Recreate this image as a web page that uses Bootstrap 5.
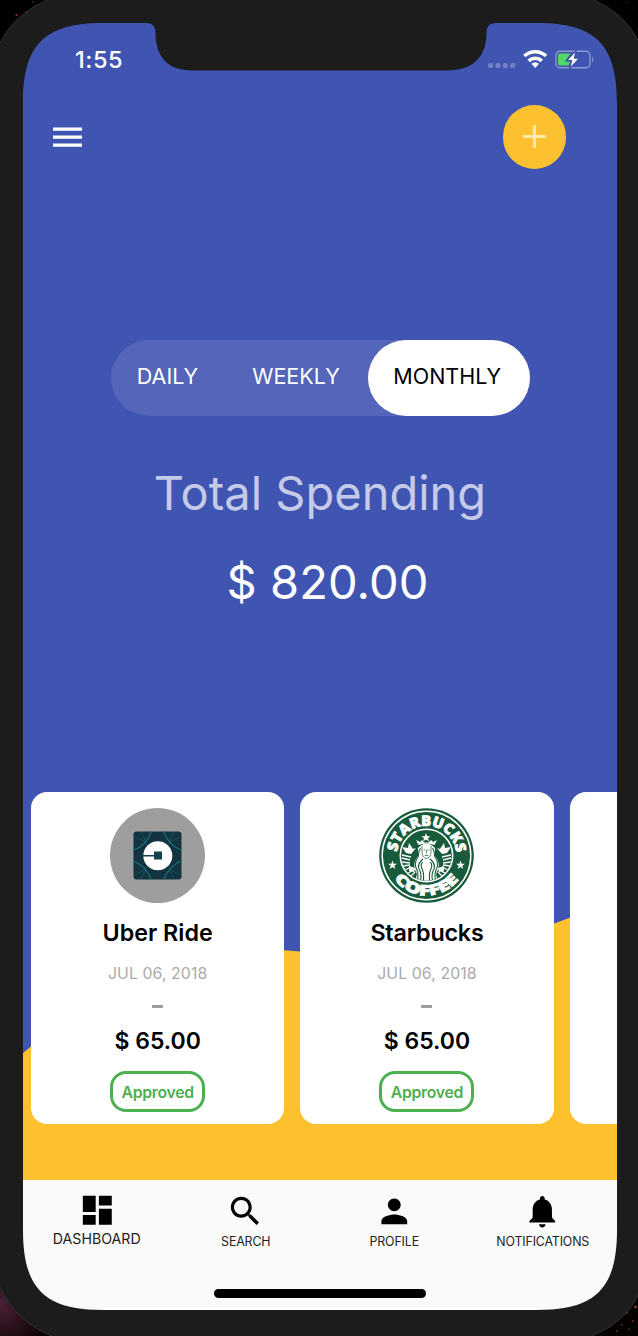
<!DOCTYPE html>
<html lang="en">
<head>
<meta charset="utf-8">
<meta name="viewport" content="width=device-width, initial-scale=1">
<title>Total Spending</title>
<link href="https://cdn.jsdelivr.net/npm/bootstrap@5.3.0/dist/css/bootstrap.min.css" rel="stylesheet">
<style>
  body { font-family: Inter, Roboto, "Liberation Sans", sans-serif; background: #000; width: 638px; height: 1336px; overflow: hidden; }
  svg { display: block; flex-shrink: 0; }
  .phone { width: 638px; height: 1336px; padding: 23px 21px 26px 23px; background: #1c1c1c; }
  .bezel { position: absolute; inset: 0; pointer-events: none; z-index: 5; }
  .hero { height: 1157px; background: #4055b1; }
  .wave { position: absolute; left: 0; bottom: 0; }
  .status { height: 73px; padding: 0 23px 0 52px; }
  .clock { font-size: 23.5px; font-weight: 500; line-height: 28px; letter-spacing: .5px; }
  .topbar { height: 82px; padding: 0 51px 0 30px; }
  .fab { width: 63.4px; height: 63.4px; background: #fdc02f; }
  .period { width: 418.5px; height: 76px; margin: 162px 0 0 88px; background: #5565b9; border-radius: 38px; }
  .period button { height: 76px; font-size: 21.5px; line-height: 26px; color: #fff; border: 0; background: none; padding: 0 0 4px; }
  .period .chosen { width: 161.5px; background: #fff; color: #000; border-radius: 38px; padding-right: 3px; }
  .total-label { font-size: 47px; line-height: 58px; color: #c5cae9; margin-top: 48px; }
  .total-sum { font-size: 47px; line-height: 58px; margin: 31px 0 0 15px; letter-spacing: .1px; }
  .deck { margin: 181px 0 0 8px; gap: 16px; }
  .expense { width: 253.3px; height: 332.4px; border: 0; border-radius: 16px; padding-top: 16px; flex: none; color: #000; }
  .expense h2 { font-size: 23.3px; line-height: 28px; font-weight: 600; margin: 16px 0 0; }
  .expense .tight { letter-spacing: -.2px; }
  .day { font-size: 15.8px; line-height: 20px; color: #aaa; margin-top: 17px; letter-spacing: .1px; }
  .dash { width: 11px; height: 2.6px; background: #9e9e9e; margin-top: 21.4px; }
  .price { font-size: 23px; line-height: 28px; font-weight: 600; margin-top: 19px; }
  .state { width: 95px; height: 41px; border: 3px solid #4caf50; border-radius: 16px; color: #4caf50; font-size: 15.8px; font-weight: 600; letter-spacing: -.3px; margin-top: 16px; padding-top: 2px; }
  .tabs { height: 130px; background: #fafafa; color: #222; }
  .tab { width: 148.5px; padding-top: 12.4px; font-size: 12.4px; line-height: 16px; }
  .tab span { margin-top: 2.6px; letter-spacing: -.15px; }
  .tab.current { font-size: 14.2px; padding-top: 11.2px; }
  .tab.current span { margin: 1px 1px 0 0; letter-spacing: 0; }
  .home { width: 212px; height: 8.500px; border-radius: 5px; background: #000; margin: 39.500px auto 0; }
</style>
</head>
<body>
<main class="phone position-relative">
  <section class="hero position-relative overflow-hidden text-white">
    <svg class="wave" width="594" height="300" viewBox="0 0 594 300" aria-hidden="true">
      <path d="M0 173C80 106 170 68 261 70.300L277 71.500C385 78 450 72 530 44L546 38L594 18V300H0z" fill="#fdc02f"/>
    </svg>
    <div class="position-relative">
      <header class="status d-flex align-items-center justify-content-between">
        <span class="clock">1:55</span>
        <svg width="106" height="24" viewBox="0 0 106 24" aria-label="No signal, Wi-Fi, charging">
          <g fill="#7382c8"><rect y="15" width="5" height="5" rx="1.700"/><rect x="7.500" y="15" width="5" height="5" rx="1.700"/><rect x="14.800" y="15" width="5" height="5" rx="1.700"/><rect x="22.200" y="15" width="5" height="5" rx="1.700"/></g>
          <g fill="none" stroke="#fff" stroke-width="3.700"><path d="M36.400 8A15.800 15.800 0 0 1 58 8"/><path d="M40.700 12.800A9.500 9.500 0 0 1 53.700 12.800"/></g>
          <path d="M43.400 15.800Q47.200 12.800 51 15.800L47.200 20.100z" fill="#fff"/>
          <rect x="68" y="3.300" width="34" height="16.500" rx="4" fill="none" stroke="#8d99d2" stroke-width="1.400"/>
          <path d="M104 8.500Q106.700 11.500 104 14.500z" fill="#8d99d2"/>
          <path d="M72 5.500H82.500L77 13.500H82L80.500 17.500H72Q70 17.500 70 15.500V7.500Q70 5.500 72 5.500z" fill="#53d769"/>
          <path d="M88 2.600L78.500 12.700H83.500L81.500 21L91.500 10.200H86.500z" fill="#fff" stroke="#4055b1" stroke-width="1.300"/>
        </svg>
      </header>
      <div class="topbar d-flex align-items-center justify-content-between">
        <svg width="29" height="20" viewBox="0 0 29 20" role="img" aria-label="Menu"><path d="M0 2.100H29M0 10.100H29M0 18.100H29" stroke="#fff" stroke-width="3.400"/></svg>
        <div class="fab rounded-circle d-flex align-items-center justify-content-center" role="button" aria-label="Add">
          <svg width="23" height="23" viewBox="0 0 23 23"><path d="M0 11.500H23M11.500 0V23" stroke="#fee9ad" stroke-width="3.200"/></svg>
        </div>
      </div>
      <div class="period d-flex">
        <button type="button" style="width:113px">DAILY</button>
        <button type="button" style="width:144px">WEEKLY</button>
        <button type="button" class="chosen">MONTHLY</button>
      </div>
      <div class="total-label text-center">Total Spending</div>
      <div class="total-sum text-center">$ 820.00</div>
      <div class="deck d-flex">
        <article class="card expense align-items-center">
          <svg width="95" height="95" viewBox="0 0 95 95" role="img" aria-label="Uber">
            <circle cx="47.500" cy="47.500" r="47.500" fill="#9e9e9e"/>
            <rect x="23.500" y="23.500" width="48" height="48" rx="3" fill="#12333f"/>
            <g fill="none" stroke="#16747a" stroke-width="1.100"><path d="M23.500 42Q35 39 41.500 23.500M53.500 23.500Q60 39 71.500 42M23.500 53Q35 57 41.500 71.500M53.500 71.500Q60 57 71.500 53"/><path d="M25 29L36 34L31 24M70 29L59 34L64 24M25 67L36 61L31 71M70 67L59 61L64 71M34 34L41 40M61 34L54 40M34 61L41 55M61 61L54 55" stroke-width=".5"/></g>
            <circle cx="47.800" cy="47.800" r="14.500" fill="#fff"/>
            <path d="M33 46.900H44V43.500H52V51.500H44V48.500H33z" fill="#15414d"/>
          </svg>
          <h2>Uber Ride</h2>
          <div class="day">JUL 06, 2018</div>
          <div class="dash"></div>
          <div class="price">$ 65.00</div>
          <div class="state d-flex align-items-center justify-content-center">Approved</div>
        </article>
        <article class="card expense align-items-center">
          <svg width="95" height="95" viewBox="0 0 95 95" role="img" aria-label="Starbucks Coffee">
            <defs>
              <path id="arcTop" d="M18.077 51.600A29.700 29.700 0 1 1 76.923 51.600"/>
              <path id="arcLow" d="M7.500 47.500A40 40 0 0 0 87.500 47.500"/>
              <clipPath id="disc"><circle cx="47.500" cy="47.500" r="25.300"/></clipPath>
            </defs>
            <circle cx="47.500" cy="47.500" r="47.300" fill="#175b3b"/>
            <circle cx="47.500" cy="47.500" r="44.300" fill="none" stroke="#fff" stroke-width="1.500"/>
            <circle cx="47.500" cy="47.500" r="26.200" fill="none" stroke="#fff" stroke-width="1.600"/>
            <g fill="#fff" stroke="#fff" stroke-width=".7" font-family="'Open Sans', 'Noto Sans', sans-serif" font-weight="800">
              <text font-size="14.600"><textPath href="#arcTop" startOffset="7.500" textLength="87" lengthAdjust="spacingAndGlyphs">STARBUCKS</textPath></text>
              <text font-size="14.600"><textPath href="#arcLow" startOffset="25" textLength="75" lengthAdjust="spacingAndGlyphs">COFFEE</textPath></text>
            </g>
            <g fill="#fff">
              <path id="star" d="M13.500 52.500L14.600 55.700H18L15.300 57.700L16.300 61L13.500 59L10.700 61L11.700 57.700L9 55.700H12.400z"/>
              <use href="#star" x="68"/>
            </g>
            <g clip-path="url(#disc)">
              <path d="M47 25L48.200 28.300H51.500L49 30.200L50 33.500L47 31.600L44 33.500L45 30.200L42.500 28.300H45.800zM37 32L41 34L43 32L45 34.500H49.500L52 32L54 34L58 32L55.500 37Q47.500 34 39.500 37z" fill="#fff"/>
              <path d="M39 40Q47.500 31 56 40V48Q63 56 57 66L59 74H36L38 66Q32 56 39 48z" fill="#fff"/>
              <path d="M41.500 40Q39 44 39.500 48Q34 55 38 62Q40 67 38 74M44 51Q37 57 41 63Q43 68 41 74M53.500 40Q56 44 55.500 48Q61 55 57 62Q55 67 57 74M51 51Q58 57 54 63Q52 68 54 74M43.500 54Q41 58 43.500 62Q45.500 67 44 74M51.500 54Q54 58 51.500 62Q49.500 67 51 74" fill="none" stroke="#175b3b" stroke-width="1.100"/>
              <path d="M43 38V45Q44 50 47.500 50.500Q51 50 52 45V38M44.500 42H46.500M48.500 42H50.500M47.500 42V45.500M45.700 47.500H49.300" fill="none" stroke="#175b3b" stroke-width=".7"/>
              <path d="M23 39L29 40L30 35L34 41L37 40L32 46L27 45zM72 39L66 40L65 35L61 41L58 40L63 46L68 45zM30 58L36 60L35 64L30 63zM65 58L59 60L60 64L65 63z" fill="#fff"/>
              <path d="M23 47L32 49M23 50L31 52M23 54L31 55M24 58L31 57M26 62L32 59M28 66L34 62M31 69L36 64M72 47L63 49M72 50L64 52M72 54L64 55M71 58L64 57M69 62L63 59M67 66L61 62M64 69L59 64" stroke="#fff" stroke-width="1.300"/>
            </g>
          </svg>
          <h2 class="tight">Starbucks</h2>
          <div class="day">JUL 06, 2018</div>
          <div class="dash"></div>
          <div class="price">$ 65.00</div>
          <div class="state d-flex align-items-center justify-content-center">Approved</div>
        </article>
        <article class="card expense"></article>
      </div>
    </div>
  </section>
  <nav class="tabs">
    <div class="d-flex">
      <div class="tab current d-flex flex-column align-items-center"><svg width="38.600" height="38.600" viewBox="0 0 24 24"><path d="M3 13h8V3H3v10zm0 8h8v-6H3v6zm10 0h8V11h-8v10zm0-18v6h8V3h-8z"/></svg><span>DASHBOARD</span></div>
      <div class="tab d-flex flex-column align-items-center"><svg width="38.600" height="38.600" viewBox="0 0 24 24"><path d="M15.500 14h-.79l-.28-.27C15.410 12.590 16 11.110 16 9.500 16 5.910 13.090 3 9.500 3S3 5.910 3 9.500 5.910 16 9.500 16c1.610 0 3.090-.59 4.230-1.570l.27.28v.79l5 4.990L20.490 19l-4.990-5zm-6 0C7.010 14 5 11.990 5 9.500S7.010 5 9.500 5 14 7.010 14 9.500 11.990 14 9.500 14z"/></svg><span>SEARCH</span></div>
      <div class="tab d-flex flex-column align-items-center"><svg width="38.600" height="38.600" viewBox="0 0 24 24"><path d="M12 12c2.210 0 4-1.790 4-4s-1.790-4-4-4-4 1.790-4 4 1.790 4 4 4zm0 2c-2.670 0-8 1.340-8 4v2h16v-2c0-2.660-5.330-4-8-4z"/></svg><span>PROFILE</span></div>
      <div class="tab d-flex flex-column align-items-center"><svg width="38.600" height="38.600" viewBox="0 0 24 24"><path d="M12 22c1.100 0 2-.9 2-2h-4c0 1.100.89 2 2 2zm6-6v-5c0-3.070-1.640-5.640-4.500-6.320V4c0-.83-.67-1.500-1.500-1.500s-1.500.67-1.500 1.500v.68C7.630 5.360 6 7.920 6 11v5l-2 2v1h16v-1l-2-2z"/></svg><span>NOTIFICATIONS</span></div>
    </div>
    <div class="home"></div>
  </nav>
  <svg class="bezel" width="638" height="1336" viewBox="0 0 638 1336" aria-hidden="true">
    <defs>
      <radialGradient id="glow" gradientUnits="userSpaceOnUse" cx="0" cy="1305" r="50"><stop offset="0" stop-color="#4a2034"/><stop offset="1" stop-color="#0c0306"/></radialGradient>
    </defs>
    <path fill="#1c1c1c" fill-rule="evenodd" d="M0 0H638V1336H0zM23 103V1230C23 1288.500 44.500 1310 103 1310H537C595.500 1310 617 1288.500 617 1230V103C617 44.500 595.500 23 537 23H495Q486.500 23 486.500 33C486.500 57 473 70.500 447 70.500H192C168 70.500 155.500 57 155.500 33Q155.500 23 147 23H103C44.500 23 23 44.500 23 103z"/>
    <g fill="#000" stroke="#303030" stroke-width="1">
      <path d="M-1 45Q13 14 49 -1H-1zM639 42Q625 13 592 -1H639z"/>
      <path d="M-1 1285Q14 1321 54 1337H-1z" fill="url(#glow)"/>
      <path d="M639 1293Q626 1323 589 1337H639z" fill="#070202"/>
    </g>
    <g fill="#a33a42"><circle cx="16.500" cy="15" r="1"/><circle cx="26.500" cy="12.500" r=".8"/><circle cx="33" cy="2" r=".7"/></g>
    <g fill="#4a1518"><circle cx="627" cy="3" r=".8"/><circle cx="634" cy="8" r=".8"/><circle cx="631" cy="13" r=".6"/><circle cx="10" cy="1318" r=".8"/><circle cx="17" cy="1328" r=".8"/></g>
    <g fill="#b04a24"><circle cx="635.500" cy="1307" r="1.200"/><circle cx="627" cy="1313" r=".8"/><circle cx="633" cy="1321" r=".8"/><circle cx="622" cy="1325" r=".7"/><circle cx="617" cy="1331" r=".8"/><circle cx="629" cy="1329" r=".7"/></g>
  </svg>
</main>
<script src="https://cdn.jsdelivr.net/npm/bootstrap@5.3.0/dist/js/bootstrap.bundle.min.js"></script>
</body>
</html>
